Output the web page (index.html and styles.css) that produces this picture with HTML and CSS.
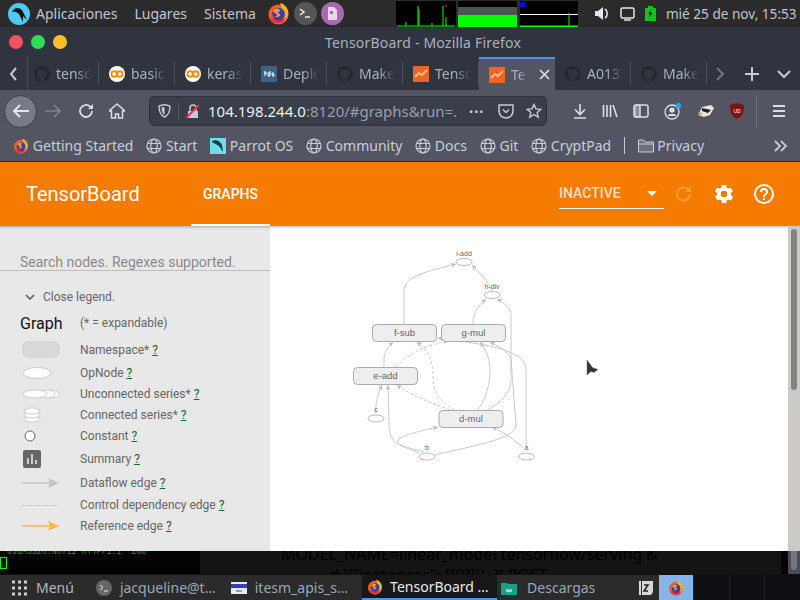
FILE: index.html
```html
<!DOCTYPE html>
<html>

<head>
    <meta charset="utf-8">
    <title>TensorBoard - Mozilla Firefox</title>
    <link rel="stylesheet" href="styles.css">
</head>

<body>
    <svg class="defs" width="0" height="0">
        <symbol id="fx" viewBox="0 0 24 24">
            <circle cx="12" cy="13" r="10.500" fill="#f3601f" />
            <path d="M3 17a10.500 10.500 0 0 0 18 0z" fill="#e8264e" />
            <path d="M14 1c6 2 9 7 8 12-1 4-3 6-5 7 3-4 2-9-1-12-1-2-2-4-2-7z" fill="#ffb01f" />
            <circle cx="12" cy="12.500" r="6.500" fill="#2f3fb5" />
            <path d="M7 8c3-2 6-1 7 1l-3 2 3 2c-1 3-4 3-6 2 3 0 3-2 1-3-2-1-3-2-2-4z" fill="#ff9a1f" />
        </symbol>
        <symbol id="gh" viewBox="0 0 16 16">
            <path fill="#24272e" d="M8 0a8 8 0 0 0-2.500 15.600c.4.100.5-.2.500-.4v-1.400c-2.200.5-2.700-1-2.700-1-.4-.9-.9-1.200-.9-1.200-.7-.5.100-.5.100-.5.800.1 1.200.8 1.200.8.700 1.200 1.900.9 2.300.7.100-.5.300-.9.500-1.100-1.800-.2-3.600-.9-3.600-4 0-.9.300-1.600.8-2.100-.1-.2-.4-1 .1-2.100 0 0 .7-.2 2.200.8a7.600 7.600 0 0 1 4 0c1.500-1 2.200-.8 2.200-.8.400 1.100.2 1.900.1 2.100.5.600.8 1.300.8 2.100 0 3.100-1.900 3.700-3.700 3.900.3.300.6.800.6 1.500v2.200c0 .2.100.5.600.4A8 8 0 0 0 8 0z" />
        </symbol>
        <symbol id="co" viewBox="0 0 16 16">
            <circle cx="8" cy="8" r="8" fill="#fff" />
            <circle cx="5.200" cy="8" r="2.800" fill="none" stroke="#f09000" stroke-width="2" />
            <circle cx="10.800" cy="8" r="2.800" fill="none" stroke="#f09000" stroke-width="2" />
        </symbol>
        <symbol id="tb" viewBox="0 0 16 16">
            <rect width="16" height="16" fill="#f0642a" />
            <path d="M2 11l4-4 3 2 5-5" fill="none" stroke="#ffc27a" stroke-width="1.800" />
        </symbol>
        <symbol id="globe" viewBox="0 0 16 16">
            <g fill="none" stroke="#c8ccd4" stroke-width="1.200">
                <circle cx="8" cy="8" r="7" />
                <ellipse cx="8" cy="8" rx="3.200" ry="7" />
                <path d="M1.500 5.500h13M1.500 10.500h13" />
            </g>
        </symbol>
    </svg>

    <div class="panel">
        <svg class="parrot" width="22" height="22" viewBox="0 0 22 22">
            <circle cx="11" cy="11" r="11" fill="#4fc9ee" />
            <path d="M4 9C6 4 11 4 14 7L19 17 15 13 15 19 11 11C9 9 7 8.500 4 9z" fill="#0a0f14" />
        </svg>
        <span class="menu-item first">Aplicaciones</span>
        <span class="menu-item">Lugares</span>
        <span class="menu-item">Sistema</span>
        <svg class="launch-fx" width="23" height="23">
            <use href="#fx" />
        </svg>
        <svg class="launch" width="23" height="23" viewBox="0 0 23 23">
            <circle cx="11.500" cy="11.500" r="11.500" fill="#555" />
            <path d="M6 7l4 3-4 3" fill="none" stroke="#eee" stroke-width="1.500" />
            <path d="M11 15h5" stroke="#eee" stroke-width="1.500" />
        </svg>
        <svg class="launch" width="23" height="23" viewBox="0 0 23 23">
            <circle cx="11.500" cy="11.500" r="11.500" fill="#a868ae" />
            <path d="M7 5h6l3 3v10H7z" fill="#e6d8e8" />
            <path d="M9 9h3v3H9z" fill="#a868ae" />
        </svg>
        <svg class="monitors" width="182" height="26" viewBox="0 0 182 26">
            <rect width="60" height="26" fill="#000" />
            <path d="M1 25h58M22 25V5M23 25V8M47 25V5M50 25V16M36 25v-3M10 25v-4" stroke="#0f0" />
            <path d="M49 5h2" stroke="#f00" />
            <rect x="62" width="59" height="26" fill="#000" />
            <rect x="62" y="6" width="59" height="8" fill="#47594a" />
            <rect x="62" y="14" width="59" height="12" fill="#0f0" />
            <rect x="124" width="58" height="26" fill="#000" />
            <rect x="124" y="1" width="5" height="5" fill="#00f" />
            <path d="M124 13.500h58" stroke="#fff" />
            <path d="M124 24.500h58" stroke="#f00" />
            <path d="M124 25.500h58M173 25V12" stroke="#0f0" />
        </svg>
        <svg class="tray first" width="15" height="15" viewBox="0 0 15 15">
            <path d="M0 5h3l5-4v13l-5-4H0z" fill="#e4e6ea" />
            <path d="M10 3c3 2 3 7 0 9" fill="none" stroke="#e4e6ea" stroke-width="1.600" />
        </svg>
        <svg class="tray" width="15" height="14" viewBox="0 0 15 14">
            <rect x="1" y="1" width="13" height="10" rx="1.500" fill="none" stroke="#e4e6ea" stroke-width="1.500" />
            <path d="M4 13h7" stroke="#e4e6ea" stroke-width="1.500" />
        </svg>
        <svg class="tray" width="11" height="15" viewBox="0 0 11 15">
            <path d="M3 0h5v2h3v13H0V2h3z" fill="#0fc21a" />
            <path d="M6 4L3 8h2l-1 3 4-4H6z" fill="#123" />
        </svg>
        <span class="clock">mié 25 de nov, 15:53</span>
    </div>

    <div class="titlebar">
        <span class="dot red"></span>
        <span class="dot green"></span>
        <span class="dot yellow"></span>
        <span class="win-title">TensorBoard - Mozilla Firefox</span>
    </div>

    <div class="tabs">
        <svg class="tab-arrow" width="27" height="16" viewBox="0 0 27 16">
            <path d="M16 2l-5 6 5 6" fill="none" stroke="#c6cad2" stroke-width="2" />
        </svg>
        <div class="tab narrow"><svg width="16" height="16"><use href="#gh" /></svg><span class="tab-text">tensorflow</span></div>
        <div class="tab"><svg width="16" height="16"><use href="#co" /></svg><span class="tab-text">basic_class</span></div>
        <div class="tab"><svg width="16" height="16"><use href="#co" /></svg><span class="tab-text">keras_model</span></div>
        <div class="tab">
            <svg width="16" height="16" viewBox="0 0 16 16">
                <rect width="16" height="16" fill="#3d6488" />
                <path d="M3 7h3M4 5v5M9 5v5H7V7h2M13 7h-2v1.500h2V10h-2" fill="none" stroke="#fff" />
            </svg>
            <span class="tab-text">Deploy your</span>
        </div>
        <div class="tab"><svg width="16" height="16"><use href="#gh" /></svg><span class="tab-text">Make your</span></div>
        <div class="tab"><svg width="16" height="16"><use href="#tb" /></svg><span class="tab-text">TensorBoard</span></div>
        <div class="tab active">
            <svg width="16" height="16"><use href="#tb" /></svg><span class="tab-text short">TensorB</span>
            <svg class="tab-close" width="11" height="11" viewBox="0 0 11 11">
                <path d="M1 1l9 9M10 1l-9 9" stroke="#e4e6ea" stroke-width="1.600" />
            </svg>
        </div>
        <div class="tab"><svg width="16" height="16"><use href="#gh" /></svg><span class="tab-text">A01351</span></div>
        <div class="tab"><svg width="16" height="16"><use href="#gh" /></svg><span class="tab-text">Make your</span></div>
        <svg class="tab-end" width="93" height="16" viewBox="0 0 93 16">
            <path d="M10 2l6 6-6 6" fill="none" stroke="#707580" stroke-width="2" />
            <path d="M38 8h14M45 1v14" stroke="#c6cad2" stroke-width="2" />
            <path d="M71 5l6 6 6-6" fill="none" stroke="#c6cad2" stroke-width="2" />
        </svg>
    </div>

    <div class="toolbar">
        <div class="back">
            <svg width="18" height="16" viewBox="0 0 18 16">
                <path d="M17 8H2M8 2L2 8l6 6" fill="none" stroke="#e8e9ec" stroke-width="1.800" />
            </svg>
        </div>
        <svg class="nav-icon" width="18" height="16" viewBox="0 0 18 16">
            <path d="M1 8h15M10 2l6 6-6 6" fill="none" stroke="#80848e" stroke-width="1.600" />
        </svg>
        <svg class="nav-icon" width="16" height="16" viewBox="0 0 16 16">
            <path d="M14 8a6 6 0 1 1-2-4.500L14 5" fill="none" stroke="#dcdee3" stroke-width="1.800" />
            <path d="M15 1v5h-5z" fill="#dcdee3" />
        </svg>
        <svg class="nav-icon" width="16" height="16" viewBox="0 0 16 16">
            <path d="M8 1L0 8h2.500v7h4v-4h3v4h4V8H16z" fill="none" stroke="#dcdee3" stroke-width="1.500" />
        </svg>
        <div class="urlbar">
            <svg class="shield" width="13" height="14" viewBox="0 0 13 14">
                <path d="M1 2l5.500-1.500L12 2c0 5-1 9-5.500 11C2 11 1 7 1 2z" fill="none" stroke="#c6cad2" stroke-width="1.400" />
                <path d="M6.500 3v8C4 9 3.500 7 3.500 3.500z" fill="#c6cad2" />
            </svg>
            <span class="url-sep"></span>
            <svg class="lock" width="15" height="15" viewBox="0 0 15 15">
                <path d="M3 7h10v7H3z" fill="#c6cad2" />
                <path d="M5 7V4a3 3 0 0 1 6 0v3" fill="none" stroke="#c6cad2" stroke-width="1.500" />
                <path d="M1 14L14 1" stroke="#e8304a" stroke-width="1.800" />
            </svg>
            <span class="url"><span class="host">104.198.244.0</span>:8120/#graphs&amp;run=.</span>
            <span class="url-dots">•••</span>
            <svg class="pocket" width="16" height="15" viewBox="0 0 16 15">
                <path d="M1 1h14v6a7 7 0 0 1-14 0z" fill="none" stroke="#c6cad2" stroke-width="1.500" />
                <path d="M5 5.500l3 3 3-3" fill="none" stroke="#c6cad2" stroke-width="1.500" />
            </svg>
            <svg class="star" width="16" height="16" viewBox="0 0 16 16">
                <path d="M8 1.500l2 4.400 4.700.5-3.500 3.200 1 4.700L8 11.500l-4.200 2.800 1-4.700L1.300 6.400 6 5.900z" fill="none" stroke="#c6cad2" stroke-width="1.400" />
            </svg>
        </div>
        <div class="tools">
            <svg width="14" height="16" viewBox="0 0 14 16">
                <path d="M7 1v10M2 6.500L7 11.500l5-5M1 15h12" fill="none" stroke="#dcdee3" stroke-width="1.600" />
            </svg>
            <svg width="16" height="14" viewBox="0 0 16 14">
                <path d="M1.500 1v12M5 1v12M8.500 1v12M11 1l4 12" fill="none" stroke="#dcdee3" stroke-width="1.600" />
            </svg>
            <svg width="16" height="14" viewBox="0 0 16 14">
                <rect x="1" y="1" width="14" height="12" rx="2" fill="none" stroke="#dcdee3" stroke-width="1.500" />
                <path d="M7 1v12M2 1h5v12H2z" fill="#dcdee3" fill-opacity=".4" stroke="#dcdee3" />
            </svg>
            <svg width="18" height="18" viewBox="0 0 18 18">
                <circle cx="8" cy="10" r="7" fill="none" stroke="#dcdee3" stroke-width="1.300" />
                <circle cx="8" cy="8" r="2.600" fill="#dcdee3" />
                <path d="M3.500 14c1-3 8-3 9 0" fill="#dcdee3" />
                <circle cx="14.500" cy="3.500" r="2.800" fill="#1ea5f0" />
            </svg>
            <svg width="18" height="14" viewBox="0 0 18 14">
                <path d="M1 11L5 3l9-2 3 3-4 7-6 2z" fill="#e8e4d8" />
                <path d="M5 4l9 2-3 3-6-2z" fill="#222" />
                <path d="M1 11l3-3 1 3z" fill="#c96" />
            </svg>
            <svg width="14" height="16" viewBox="0 0 14 16">
                <path d="M7 0l7 2c0 7-1 11-7 14C1 13 0 9 0 2z" fill="#7c1216" />
                <text x="7" y="10" class="ub">UD</text>
            </svg>
        </div>
        <span class="tool-sep"></span>
        <svg class="burger" width="14" height="12" viewBox="0 0 14 12">
            <path d="M1 1h12M1 6h12M1 11h12" stroke="#dcdee3" stroke-width="1.800" />
        </svg>
    </div>

    <div class="bookmarks">
        <span class="mark"><svg width="16" height="16"><use href="#fx" /></svg>Getting Started</span>
        <span class="mark"><svg width="16" height="16"><use href="#globe" /></svg>Start</span>
        <span class="mark">
            <svg width="16" height="16" viewBox="0 0 16 16">
                <rect width="16" height="16" fill="#6fdcec" />
                <path d="M2 3c4-2 8 0 10 4l1 7-4-6-7-4z" fill="#1d3a44" />
            </svg>Parrot OS</span>
        <span class="mark"><svg width="16" height="16"><use href="#globe" /></svg>Community</span>
        <span class="mark"><svg width="16" height="16"><use href="#globe" /></svg>Docs</span>
        <span class="mark"><svg width="16" height="16"><use href="#globe" /></svg>Git</span>
        <span class="mark"><svg width="16" height="16"><use href="#globe" /></svg>CryptPad</span>
        <span class="mark-sep"></span>
        <span class="mark">
            <svg width="16" height="14" viewBox="0 0 16 14">
                <path d="M.5 13V1h5l1.500 2h8.500v10z" fill="#6c707b" stroke="#c8ccd4" />
                <path d="M.5 5h15" stroke="#c8ccd4" />
            </svg>Privacy</span>
        <svg class="more" width="13" height="12" viewBox="0 0 13 12">
            <path d="M1 1l5 5-5 5M7 1l5 5-5 5" fill="none" stroke="#c6cad2" stroke-width="1.800" />
        </svg>
    </div>

    <div class="tb-header">
        <span class="tb-logo">TensorBoard</span>
        <span class="tb-tab">GRAPHS</span>
        <div class="tb-select">
            <span>INACTIVE</span>
            <span class="caret"></span>
        </div>
        <svg class="tb-reload" width="20" height="20" viewBox="0 0 20 20">
            <path d="M16 10a6.500 6.500 0 1 1-2-4.700L16 7" fill="none" stroke="#fb9a3c" stroke-width="2" />
            <path d="M17 2v6h-6z" fill="#fb9a3c" />
        </svg>
        <svg class="tb-gear" width="22" height="22" viewBox="0 0 24 24">
            <path fill="#fff" d="M19.400 13c0-.3.100-.6.100-1s0-.7-.1-1l2.100-1.600c.2-.2.200-.4.100-.6l-2-3.500c-.1-.2-.4-.3-.6-.2l-2.500 1c-.5-.4-1.100-.7-1.700-1l-.4-2.600c0-.2-.2-.4-.5-.4h-4c-.2 0-.5.200-.5.400l-.4 2.600c-.6.300-1.200.6-1.700 1l-2.500-1c-.2-.1-.5 0-.6.200l-2 3.500c-.1.200-.1.400.1.600L4.600 11c0 .3-.1.600-.1 1s0 .7.100 1l-2.100 1.600c-.2.200-.2.400-.1.600l2 3.500c.1.200.4.300.6.200l2.500-1c.5.400 1.100.7 1.700 1l.4 2.600c0 .2.300.4.500.4h4c.3 0 .5-.2.500-.4l.4-2.600c.6-.3 1.200-.6 1.700-1l2.500 1c.2.100.5 0 .6-.2l2-3.500c.1-.2.100-.4-.1-.6zM12 15.500a3.500 3.500 0 1 1 0-7 3.500 3.500 0 0 1 0 7z" />
        </svg>
        <svg class="tb-help" width="24" height="24" viewBox="0 0 24 24">
            <path fill="#fff" d="M11 18h2v-2h-2zm1-16a10 10 0 1 0 0 20 10 10 0 0 0 0-20zm0 18a8 8 0 1 1 0-16 8 8 0 0 1 0 16zm0-14a4 4 0 0 0-4 4h2a2 2 0 1 1 4 0c0 2-3 1.750-3 5h2c0-2.250 3-2.500 3-5a4 4 0 0 0-4-4z" />
        </svg>
    </div>

    <div class="content">
        <div class="sidebar">
            <div class="search">Search nodes. Regexes supported.</div>
            <div class="legend-toggle">
                <svg width="10" height="7" viewBox="0 0 10 7">
                    <path d="M1 1l4 4 4-4" fill="none" stroke="#555" stroke-width="1.500" />
                </svg>
                <span>Close legend.</span>
            </div>
            <div class="legend">
                <div class="row head"><span class="legend-title">Graph</span><span>(* = expandable)</span></div>
                <div class="row r-ns">
                    <svg width="38" height="17" viewBox="0 0 38 17"><rect x="1" y="1" width="36" height="15" rx="5" fill="#d9d9d9" stroke="#ccc" /></svg>
                    <span>Namespace* <a>?</a></span>
                </div>
                <div class="row r-op">
                    <svg width="38" height="14" viewBox="0 0 38 14"><ellipse cx="15" cy="7" rx="14" ry="5.500" fill="#fff" stroke="#ccc" /></svg>
                    <span>OpNode <a>?</a></span>
                </div>
                <div class="row r-un">
                    <svg width="38" height="12" viewBox="0 0 38 12">
                        <ellipse cx="29" cy="6" rx="8" ry="4" fill="#fff" stroke="#ccc" />
                        <ellipse cx="24" cy="6" rx="9" ry="4" fill="#fff" stroke="#ccc" />
                        <ellipse cx="13" cy="6" rx="12" ry="4" fill="#fff" stroke="#ccc" />
                    </svg>
                    <span>Unconnected series* <a>?</a></span>
                </div>
                <div class="row r-co">
                    <svg width="38" height="16" viewBox="0 0 38 16">
                        <ellipse cx="10" cy="12" rx="8" ry="3" fill="#fff" stroke="#ccc" />
                        <ellipse cx="10" cy="8" rx="8" ry="3" fill="#fff" stroke="#ccc" />
                        <ellipse cx="10" cy="4" rx="8" ry="3" fill="#fff" stroke="#ccc" />
                    </svg>
                    <span>Connected series* <a>?</a></span>
                </div>
                <div class="row r-const">
                    <svg width="38" height="12" viewBox="0 0 38 12"><circle cx="8" cy="6" r="5" fill="#fff" stroke="#666" /></svg>
                    <span>Constant <a>?</a></span>
                </div>
                <div class="row r-sum">
                    <svg width="38" height="18" viewBox="0 0 38 18">
                        <rect x="1" width="18" height="18" rx="2" fill="#666" />
                        <path d="M6 8v6M10 4v10M14 10v4" stroke="#e8e8e8" stroke-width="1.600" />
                    </svg>
                    <span>Summary <a>?</a></span>
                </div>
                <div class="row r-edge">
                    <svg width="38" height="12" viewBox="0 0 38 12">
                        <path d="M0 6h28" stroke="#c4c4c4" stroke-width="1.500" />
                        <path d="M26 1l11 5-11 5 2-5z" fill="#c4c4c4" />
                    </svg>
                    <span>Dataflow edge <a>?</a></span>
                </div>
                <div class="row r-edge2">
                    <svg width="38" height="4" viewBox="0 0 38 4"><path d="M0 2.500h36" stroke="#bbb" stroke-dasharray="2.500 1.500" /></svg>
                    <span>Control dependency edge <a>?</a></span>
                </div>
                <div class="row r-edge3">
                    <svg width="38" height="12" viewBox="0 0 38 12">
                        <path d="M0 6h28" stroke="#fdb549" stroke-width="1.500" />
                        <path d="M26 1l11 5-11 5 2-5z" fill="#fdb549" />
                    </svg>
                    <span>Reference edge <a>?</a></span>
                </div>
            </div>
        </div>
        <div class="main">
            <svg class="graph" width="518" height="325" viewBox="270 226 518 325">
                <defs>
                    <marker id="ah" markerWidth="6" markerHeight="6" refX="5" refY="2.500" orient="auto">
                        <path d="M0 0l5 2.500-5 2.500 1.200-2.500z" fill="#bdbdbd" />
                    </marker>
                </defs>
                <g class="edges">
                    <path marker-end="url(#ah)" d="M404 324V292C404 276 425 272 456 264" />
                    <path marker-end="url(#ah)" d="M492 291C488 280 480 274 472 265" />
                    <path marker-end="url(#ah)" d="M473 324C473 312 478 306 486 299" />
                    <path marker-end="url(#ah)" d="M488 410C500 402 511 394 511 380V315C511 308 504 303 497 299" />
                    <path marker-end="url(#ah)" d="M478 410C486 398 490 385 490 370C490 358 486 350 480 342" />
                    <path marker-end="url(#ah)" d="M384 367V358C384 352 388 347 393 342" />
                    <path marker-end="url(#ah)" d="M424 452C410 448 398 446 398 441C398 436 420 431 438 427" />
                    <path marker-end="url(#ah)" d="M419 453C400 445 390 445 389 425L388 385" />
                    <path marker-end="url(#ah)" d="M376 413C375 403 378 394 382 385" />
                    <path marker-end="url(#ah)" d="M435 455C470 446 515 440 516 425L511 360C510 352 500 347 490 342" />
                    <path marker-end="url(#ah)" d="M523 448C516 440 505 433 492 427" />
                    <path marker-end="url(#ah)" d="M526 447V370C526 350 490 345 438 338" />
                    <path class="dash" marker-end="url(#ah)" d="M396 367C410 352 425 346 448 341" />
                    <path class="dash" marker-end="url(#ah)" d="M455 410C438 400 433 393 433 375C433 360 428 350 417 342" />
                    <path class="dash" marker-end="url(#ah)" d="M450 410C430 402 412 396 397 385" />
                </g>
                <g class="nodes">
                    <rect x="372.500" y="324.500" width="64" height="17" rx="4" />
                    <rect x="441.500" y="324.500" width="64" height="17" rx="4" />
                    <rect x="353.500" y="367.500" width="64" height="17" rx="4" />
                    <rect x="439" y="410.500" width="64" height="17" rx="4" />
                </g>
                <g class="ops">
                    <ellipse cx="464" cy="262" rx="8" ry="3.500" />
                    <ellipse cx="492" cy="295" rx="8" ry="3.500" />
                    <ellipse cx="376" cy="418.500" rx="8" ry="3.500" />
                    <ellipse cx="427" cy="456.500" rx="8" ry="3.500" />
                    <ellipse cx="526.500" cy="456.500" rx="8" ry="3.500" />
                </g>
                <g class="node-labels">
                    <text x="404.500" y="336">f-sub</text>
                    <text x="473.500" y="336">g-mul</text>
                    <text x="385.500" y="379">e-add</text>
                    <text x="471" y="422">d-mul</text>
                </g>
                <g class="op-labels">
                    <text x="464" y="256">i-add</text>
                    <text x="492" y="289">h-div</text>
                    <text x="376" y="412">c</text>
                    <text x="427" y="450">b</text>
                    <text x="526.500" y="450">a</text>
                </g>
                <path class="pointer" d="M587 360v15l4-3.500 3 1 4-3-5.500-2z" />
            </svg>
        </div>
        <div class="scroll">
            <span class="thumb"></span>
        </div>
    </div>

    <div class="terminals">
        <div class="term-left">
            <div class="log">0JdM3S20:N0712 HTTP/1.1" 200</div>
            <span class="term-cursor"></span>
        </div>
        <div class="term-right">
            <div class="cmd">MODEL_NAME=linear_model tensorflow/serving &amp;</div>
            <div class="cmd second">-d '{"instances": [[0]]}' -X POST</div>
        </div>
        <div class="term-scroll">
            <span class="term-thumb"></span>
        </div>
    </div>

    <div class="taskbar">
        <svg class="task-grid" width="16" height="16" viewBox="0 0 16 16">
            <path d="M1 2h3M7 2h3M13 2h3M1 8h3M7 8h3M13 8h3M1 14h3M7 14h3M13 14h3" stroke="#c8ccd4" stroke-width="3" />
        </svg>
        <span class="task-menu">Menú</span>
        <div class="task t-term">
            <svg width="16" height="16" viewBox="0 0 16 16">
                <circle cx="8" cy="8" r="8" fill="#666" />
                <path d="M4 5l3 2.500-3 2.500M8 11h4" fill="none" stroke="#eee" />
            </svg>
            <span>jacqueline@t…</span>
        </div>
        <div class="task t-api">
            <svg width="16" height="12" viewBox="0 0 16 12">
                <rect width="16" height="12" fill="#e8eaf6" />
                <rect y="2" width="16" height="4" fill="#3240c0" />
                <rect x="5" y="8" width="6" height="2" fill="#8f98e0" />
            </svg>
            <span>itesm_apis_s…</span>
        </div>
        <div class="task t-active">
            <svg width="16" height="16"><use href="#fx" /></svg>
            <span>TensorBoard …</span>
        </div>
        <div class="task t-files">
            <svg width="16" height="14" viewBox="0 0 16 14">
                <path d="M0 2h6l1 1h9v11H0z" fill="#16a085" />
                <path d="M5 9l3 2 3-2H5zM5 10h6" stroke="#d8f0ea" />
            </svg>
            <span>Descargas</span>
        </div>
        <svg class="task-sleep" width="16" height="16" viewBox="0 0 16 16">
            <path d="M1 1h2v14H1zM4 1h11v11l-2 3H4z" fill="#d8d8d8" />
            <path d="M6 5h4l-4 6h4" fill="none" stroke="#222" stroke-width="1.500" />
        </svg>
        <div class="task-fx"><svg width="16" height="16"><use href="#fx" /></svg></div>
        <div class="pager">
            <span></span><span></span><span></span>
        </div>
    </div>
</body>

</html>
```

FILE: styles.css
```css
* {
    box-sizing: border-box;
}

html, body {
    margin: 0;
    width: 800px;
    height: 600px;
    overflow: hidden;
}

body {
    font-family: "Noto Sans", sans-serif;
    background: #000;
    display: flex;
    flex-direction: column;
}

svg {
    display: block;
    flex: none;
}

.defs {
    position: absolute;
}

/* desktop panel */
.panel {
    height: 27px;
    background: #2b2b2b;
    display: flex;
    align-items: center;
    padding-left: 8px;
    color: #c0c6d0;
    font-size: 14px;
}

.menu-item {
    margin-left: 17px;
}

.menu-item.first {
    margin-left: 6px;
}

.launch-fx {
    margin-left: 11px;
}

.launch {
    margin-left: 4px;
}

.monitors {
    margin-left: 52px;
}

.tray {
    margin-left: 10px;
}

.tray.first {
    margin-left: 17px;
}

.clock {
    margin-left: 10px;
    font-size: 13.6px;
    white-space: nowrap;
}

/* window title */
.titlebar {
    height: 30px;
    background: #2f343f;
    display: flex;
    align-items: center;
    padding-left: 9px;
    gap: 8px;
    position: relative;
}

.dot {
    width: 14px;
    height: 14px;
    border-radius: 50%;
}

.dot.red {
    background: #f5515f;
}

.dot.green {
    background: #2fdc55;
}

.dot.yellow {
    background: #fcc02e;
}

.win-title {
    margin-left: 250px;
    color: #aab2c0;
    font-size: 14px;
    letter-spacing: .2px;
    white-space: nowrap;
}

/* tabs */
.tabs {
    height: 33px;
    background: #2f343f;
    display: flex;
    align-items: center;
    color: #aab2c0;
    font-size: 14px;
}

.tab {
    width: 76px;
    height: 33px;
    padding-left: 10px;
    display: flex;
    align-items: center;
    gap: 6px;
    position: relative;
    flex: none;
}

.tab.narrow {
    width: 72px;
    padding-left: 6px;
    border-left: 1px solid #4a4f5b;
}

.tab::after {
    content: "";
    position: absolute;
    right: 0;
    top: 5px;
    bottom: 5px;
    width: 1px;
    background: #4a4f5b;
}

.tab.active {
    background: #535662;
    border-top: 2px solid #5294e2;
}

.tab.active::after {
    display: none;
}

.tab-text {
    width: 36px;
    overflow: hidden;
    white-space: nowrap;
    -webkit-mask-image: linear-gradient(to right, #000 55%, transparent);
    mask-image: linear-gradient(to right, #000 55%, transparent);
}

.tab-text.short {
    width: 16px;
}

.tab-close {
    margin-left: 6px;
}

/* nav toolbar */
.toolbar {
    height: 42px;
    background: #535662;
    display: flex;
    align-items: center;
    padding-left: 4px;
    position: relative;
}

.back {
    width: 33px;
    height: 33px;
    border-radius: 50%;
    background: #787b85;
    border: 1px solid #3c3f4a;
    display: flex;
    align-items: center;
    justify-content: center;
}

.nav-icon {
    margin-left: 7px;
}

.nav-icon + .nav-icon {
    margin-left: 15.5px;
}

.urlbar {
    width: 398px;
    height: 30px;
    margin-left: 24px;
    background: #3a3e4b;
    border: 1px solid #2f323c;
    border-radius: 5px;
    display: flex;
    align-items: center;
    padding-left: 8px;
    color: #9a9ea8;
    font-size: 15px;
}

.url-sep {
    width: 1px;
    height: 18px;
    background: #555964;
    margin-left: 7px;
}

.lock {
    margin-left: 6px;
}

.url {
    margin-left: 8px;
    width: 256px;
    white-space: nowrap;
    overflow: hidden;
}

.host {
    color: #eceef2;
}

.url-dots {
    margin-left: 5px;
    width: 26px;
    font-size: 11px;
    color: #c6cad2;
    letter-spacing: 1px;
}

.pocket {
    margin-left: 3px;
}

.star {
    margin-left: 12px;
}

.tools {
    display: flex;
    align-items: center;
    gap: 15px;
    margin-left: 26px;
}

.ub {
    font-family: "Liberation Sans", sans-serif;
    font-size: 5px;
    fill: #fff;
    text-anchor: middle;
}

.tool-sep {
    width: 1px;
    height: 33px;
    background: #6c707b;
    margin-left: 12px;
}

.burger {
    margin-left: 15px;
}

/* bookmarks */
.bookmarks {
    height: 30px;
    padding: 0 0 2px 13px;
    background: #535662;
    border-bottom: 1px solid #2a2c33;
    display: flex;
    align-items: center;
    gap: 12.7px;
    color: #c6cedb;
    font-size: 14px;
}

.mark {
    display: flex;
    align-items: center;
    gap: 3.8px;
    white-space: nowrap;
}

.mark-sep {
    width: 1px;
    height: 17px;
    background: #c6cad2;
}

.more {
    margin-left: auto;
    margin-right: 13px;
}

/* tensorboard header */
.tb-header {
    height: 64px;
    background: #f57c00;
    display: flex;
    align-items: center;
    color: #fff;
    font-family: Roboto, sans-serif;
    position: relative;
}

.tb-logo {
    font-size: 20px;
    margin-left: 26px;
    width: 165px;
}

.tb-tab {
    width: 79px;
    height: 64px;
    line-height: 64px;
    text-align: center;
    font-size: 14px;
    font-weight: 500;
    border-bottom: 2px solid #fff;
}

.tb-select {
    width: 105px;
    height: 28px;
    margin-left: 289px;
    padding-bottom: 2px;
    margin-top: 1px;
    border-bottom: 1px solid #fff;
    display: flex;
    align-items: center;
    justify-content: space-between;
    padding-right: 7px;
    font-size: 14px;
    font-weight: 500;
    color: #ffdcc0;
}

.caret {
    border: 5px solid transparent;
    border-top-color: #fff;
    border-bottom-width: 0;
}

.tb-reload {
    margin-left: 10px;
}

.tb-gear {
    margin-left: 19px;
}

.tb-help {
    margin-left: 17px;
}

/* page content */
.content {
    height: 325px;
    display: flex;
    background: #fff;
    font-family: Roboto, sans-serif;
    box-shadow: inset 0 4px 3px -3px rgba(0, 0, 0, .3);
}

.sidebar {
    width: 270px;
    background: #e8e8e8;
    box-shadow: inset 0 4px 3px -3px rgba(0, 0, 0, .3);
    color: #666;
    font-size: 12px;
}

.search {
    height: 45px;
    padding: 28px 0 0 20px;
    border-bottom: 1px solid #bdbdbd;
    font-size: 14px;
    color: #8a8a8a;
}

.legend-toggle {
    display: flex;
    align-items: center;
    gap: 8px;
    padding: 19px 0 0 25px;
    height: 33px;
}

.legend {
    padding: 5px 0 0 20px;
}

.row {
    display: flex;
    align-items: center;
    height: 21px;
    white-space: nowrap;
}

.row svg {
    margin-left: 2px;
    margin-right: 20px;
}

.row a {
    color: #0a6b2e;
    text-decoration: underline;
}

.row.head {
    height: 28px;
}

.legend-title {
    width: 60px;
    color: #111;
    font-size: 16px;
}

.r-ns {
    height: 25px;
}

.r-op, .r-un, .r-co, .r-const {
    height: 21px;
}

.r-sum {
    height: 26px;
}

.r-edge {
    height: 22px;
}

.r-edge2 {
    height: 21px;
}

.r-edge3 {
    height: 21px;
}

.main {
    width: 518px;
    overflow: hidden;
}

.edges path {
    fill: none;
    stroke: #cacaca;
    stroke-width: 1;
}

.edges .dash {
    stroke-dasharray: 3 2;
}

.nodes rect {
    fill: #eee;
    stroke: #aaa;
}

.ops ellipse {
    fill: #fff;
    stroke: #aaa;
    stroke-width: .8;
}

.node-labels text {
    font-family: "Liberation Sans", sans-serif;
    font-size: 9.5px;
    fill: #666;
    text-anchor: middle;
}

.op-labels text {
    font-family: "Liberation Sans", sans-serif;
    font-size: 7px;
    fill: #666;
    text-anchor: middle;
}

.pointer {
    fill: #333;
    stroke: #777;
    stroke-width: .5;
}

.scroll {
    width: 12px;
    padding: 3px 3px 0;
    background: #cdcac6;
}

.thumb {
    display: block;
    height: 161px;
    border-radius: 3px;
    background: #808484;
}

/* terminals under the browser */
.terminals {
    height: 23px;
    display: flex;
    overflow: hidden;
}

.term-left {
    width: 200px;
    background: #020202;
    padding-top: 3px;
}

.log {
    margin-top: -6px;
    padding-left: 7px;
    height: 8px;
    font-family: "Liberation Mono", monospace;
    font-size: 8.300px;
    line-height: 8px;
    color: #0a9a0a;
    white-space: nowrap;
    overflow: hidden;
}

.term-cursor {
    display: block;
    width: 7px;
    height: 12px;
    margin-top: 1px;
    border: 1px solid #0f0;
}

.term-right {
    flex: 1;
    background: linear-gradient(to right, #141414 581px, #050505 581px);
    color: #000;
    font-size: 16px;
    line-height: 21px;
    padding-left: 81px;
    white-space: nowrap;
}

.cmd {
    margin-top: -7px;
}

.cmd.second {
    margin-top: 0;
    padding-left: 43px;
}

.term-scroll {
    width: 12px;
    padding: 0 3px;
    background: #4a4d58;
}

.term-thumb {
    display: block;
    height: 19px;
    border-radius: 0 0 3px 3px;
    background: #737783;
}

/* bottom taskbar */
.taskbar {
    height: 26px;
    background: #2b2b2b;
    border-top: 1px solid #111;
    display: flex;
    align-items: center;
    color: #9ca6b4;
    font-size: 14px;
}

.task-grid {
    margin-left: 11px;
}

.task-menu {
    margin-left: 9px;
    color: #aeb8c6;
}

.task {
    display: flex;
    align-items: center;
    gap: 8px;
    height: 25px;
    white-space: nowrap;
}

.t-term {
    margin-left: 22px;
}

.t-api {
    margin-left: 15px;
}

.t-active {
    width: 135px;
    margin-left: 14px;
    padding-left: 5px;
    gap: 7px;
    background: #171717;
    border-bottom: 2px solid #5294e2;
    color: #e8eaee;
}

.t-files {
    margin-left: 4px;
    gap: 10px;
}

.task-sleep {
    margin-left: 43px;
}

.task-fx {
    width: 34px;
    height: 25px;
    margin-left: 5px;
    background: #85b4e8;
    display: flex;
    align-items: center;
    justify-content: center;
}

.pager {
    flex: 1;
    height: 25px;
    display: flex;
    background: #0e1014;
}

.pager span {
    flex: 1;
    border-left: 1px solid #1e2024;
}
```
